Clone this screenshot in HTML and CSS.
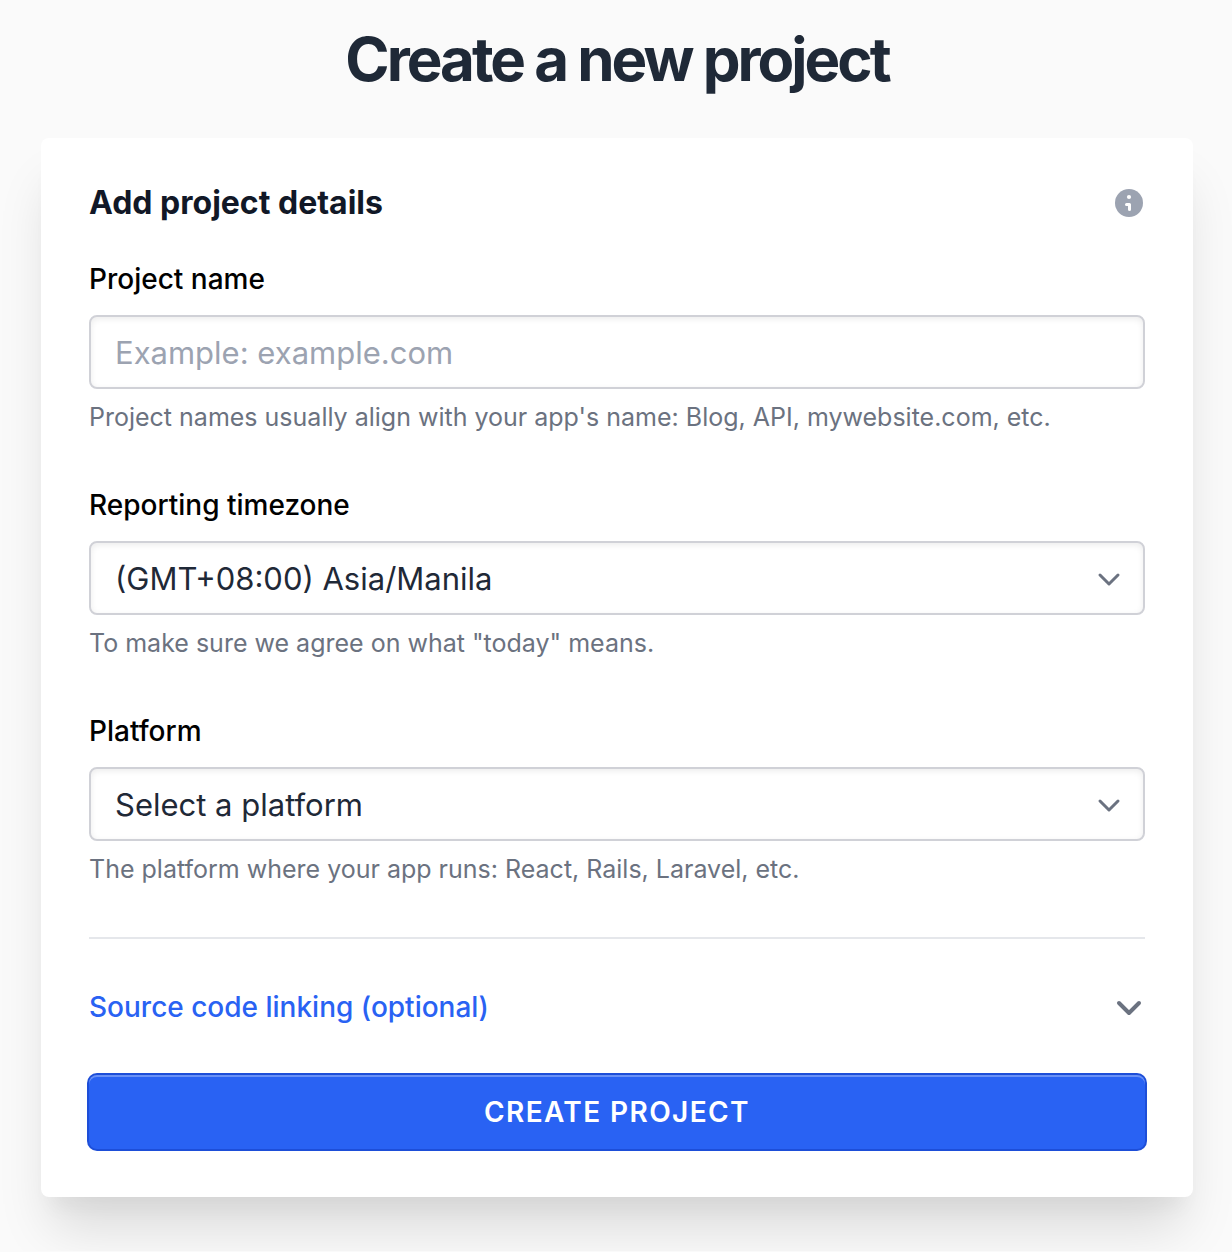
FILE: index.html
```html
<!DOCTYPE html>
<html lang="en">
<head>
    <meta charset="UTF-8">
    <meta name="viewport" content="width=device-width, initial-scale=1.0">
    <title>Create a new project</title>
    <link rel="stylesheet" href="styles.css">
</head>
<body>
    <main class="page">
        <h1 class="title">Create a new project</h1>

        <form class="card">
            <div class="card-header">
                <h2 class="card-title">Add project details</h2>
                <button type="button" class="info" aria-label="More information">
                    <svg width="28" height="28" viewBox="0 0 28 28">
                        <circle cx="14" cy="14" r="14" fill="#9ca3b1"/>
                        <circle cx="14" cy="8" r="2.1" fill="#fff"/>
                        <path d="M11.5 15.5h3v5" fill="none" stroke="#fff" stroke-width="3" stroke-linecap="round" stroke-linejoin="round"/>
                    </svg>
                </button>
            </div>

            <div class="field">
                <label for="name">Project name</label>
                <input class="control" type="text" id="name" name="name" placeholder="Example: example.com">
                <p class="hint">Project names usually align with your app's name: Blog, API, mywebsite.com, etc.</p>
            </div>

            <div class="field">
                <label for="timezone">Reporting timezone</label>
                <div class="select">
                    <select class="control" id="timezone" name="timezone">
                        <option>(GMT+08:00) Asia/Manila</option>
                    </select>
                    <svg class="arrow" width="24" height="24" viewBox="0 0 24 24"><path d="M3 8l9 9 9-9"/></svg>
                </div>
                <p class="hint">To make sure we agree on what "today" means.</p>
            </div>

            <div class="field">
                <label for="platform">Platform</label>
                <div class="select">
                    <select class="control" id="platform" name="platform">
                        <option>Select a platform</option>
                    </select>
                    <svg class="arrow" width="24" height="24" viewBox="0 0 24 24"><path d="M3 8l9 9 9-9"/></svg>
                </div>
                <p class="hint">The platform where your app runs: React, Rails, Laravel, etc.</p>
            </div>

            <hr class="divider">

            <button type="button" class="toggle" aria-expanded="false">
                <span>Source code linking (optional)</span>
                <svg width="28" height="28" viewBox="0 0 28 28"><path d="M4 10l10 10 10-10"/></svg>
            </button>

            <button type="submit" class="submit">Create project</button>
        </form>
    </main>
</body>
</html>
```

FILE: styles.css
```css
* {
    box-sizing: border-box;
}

body {
    font-family: Inter, sans-serif;
    margin: 0;
    background-color: #fafafa;
    color: #1f2937;
}

.page {
    padding: 20px 39px 54px 41px;
}

.title {
    margin: 0 0 40px;
    font-size: 60px;
    line-height: 78px;
    font-weight: 700;
    letter-spacing: -0.05em;
    text-align: center;
}

.card {
    display: flex;
    flex-direction: column;
    padding: 48px;
    border-radius: 8px;
    background-color: #fff;
    box-shadow: 0 40px 50px -10px rgba(0, 0, 0, 0.13), 0 20px 20px -10px rgba(0, 0, 0, 0.04);
}

.card-header {
    display: flex;
    justify-content: space-between;
    align-items: center;
    margin-bottom: 40px;
}

.card-title {
    margin: 0;
    font-size: 32px;
    line-height: 33px;
    font-weight: 700;
    color: #111827;
}

.info {
    display: flex;
    margin-right: 2px;
    padding: 0;
    border: 0;
    background: none;
    cursor: pointer;
}

.field {
    display: flex;
    flex-direction: column;
    margin-bottom: 48px;
}

.field label {
    margin-bottom: 16px;
    font-size: 28px;
    line-height: 40px;
    font-weight: 500;
    color: #000;
}

.control {
    width: 100%;
    height: 74px;
    padding: 0 24px;
    border: 2px solid #d0d1d7;
    border-radius: 8px;
    background-color: #fff;
    box-shadow: inset 0 2px 6px rgba(0, 0, 0, 0.08);
    font-family: inherit;
    font-size: 31px;
    color: #1f2937;
    appearance: none;
}

.control::placeholder {
    color: #9ca3b1;
    opacity: 1;
}

.select {
    position: relative;
}

.arrow {
    position: absolute;
    top: 26px;
    right: 24px;
    fill: none;
    stroke: #6b7280;
    stroke-width: 3;
    stroke-linecap: round;
    stroke-linejoin: round;
    pointer-events: none;
}

.hint {
    margin: 8px 0 0;
    font-size: 25px;
    line-height: 40px;
    color: #6b7280;
}

.divider {
    width: 100%;
    margin: 0 0 48px;
    border: 0;
    border-top: 2px solid #e5e7eb;
}

.toggle {
    display: flex;
    justify-content: space-between;
    align-items: center;
    margin-bottom: 48px;
    padding: 0 2px 0 0;
    border: 0;
    background: none;
    font-family: inherit;
    font-size: 28px;
    line-height: 40px;
    font-weight: 500;
    color: #2962f3;
    cursor: pointer;
}

.toggle svg {
    fill: none;
    stroke: #6b7280;
    stroke-width: 4;
    stroke-linecap: round;
    stroke-linejoin: round;
}

.submit {
    height: 74px;
    border: 0;
    border-radius: 8px;
    background-color: #2962f3;
    box-shadow: 0 0 0 2px #1d4ed8, inset 0 2px 0 rgba(255, 255, 255, 0.3);
    font-family: inherit;
    font-size: 28px;
    font-weight: 600;
    letter-spacing: 0.05em;
    text-transform: uppercase;
    color: #fff;
    cursor: pointer;
}
```
